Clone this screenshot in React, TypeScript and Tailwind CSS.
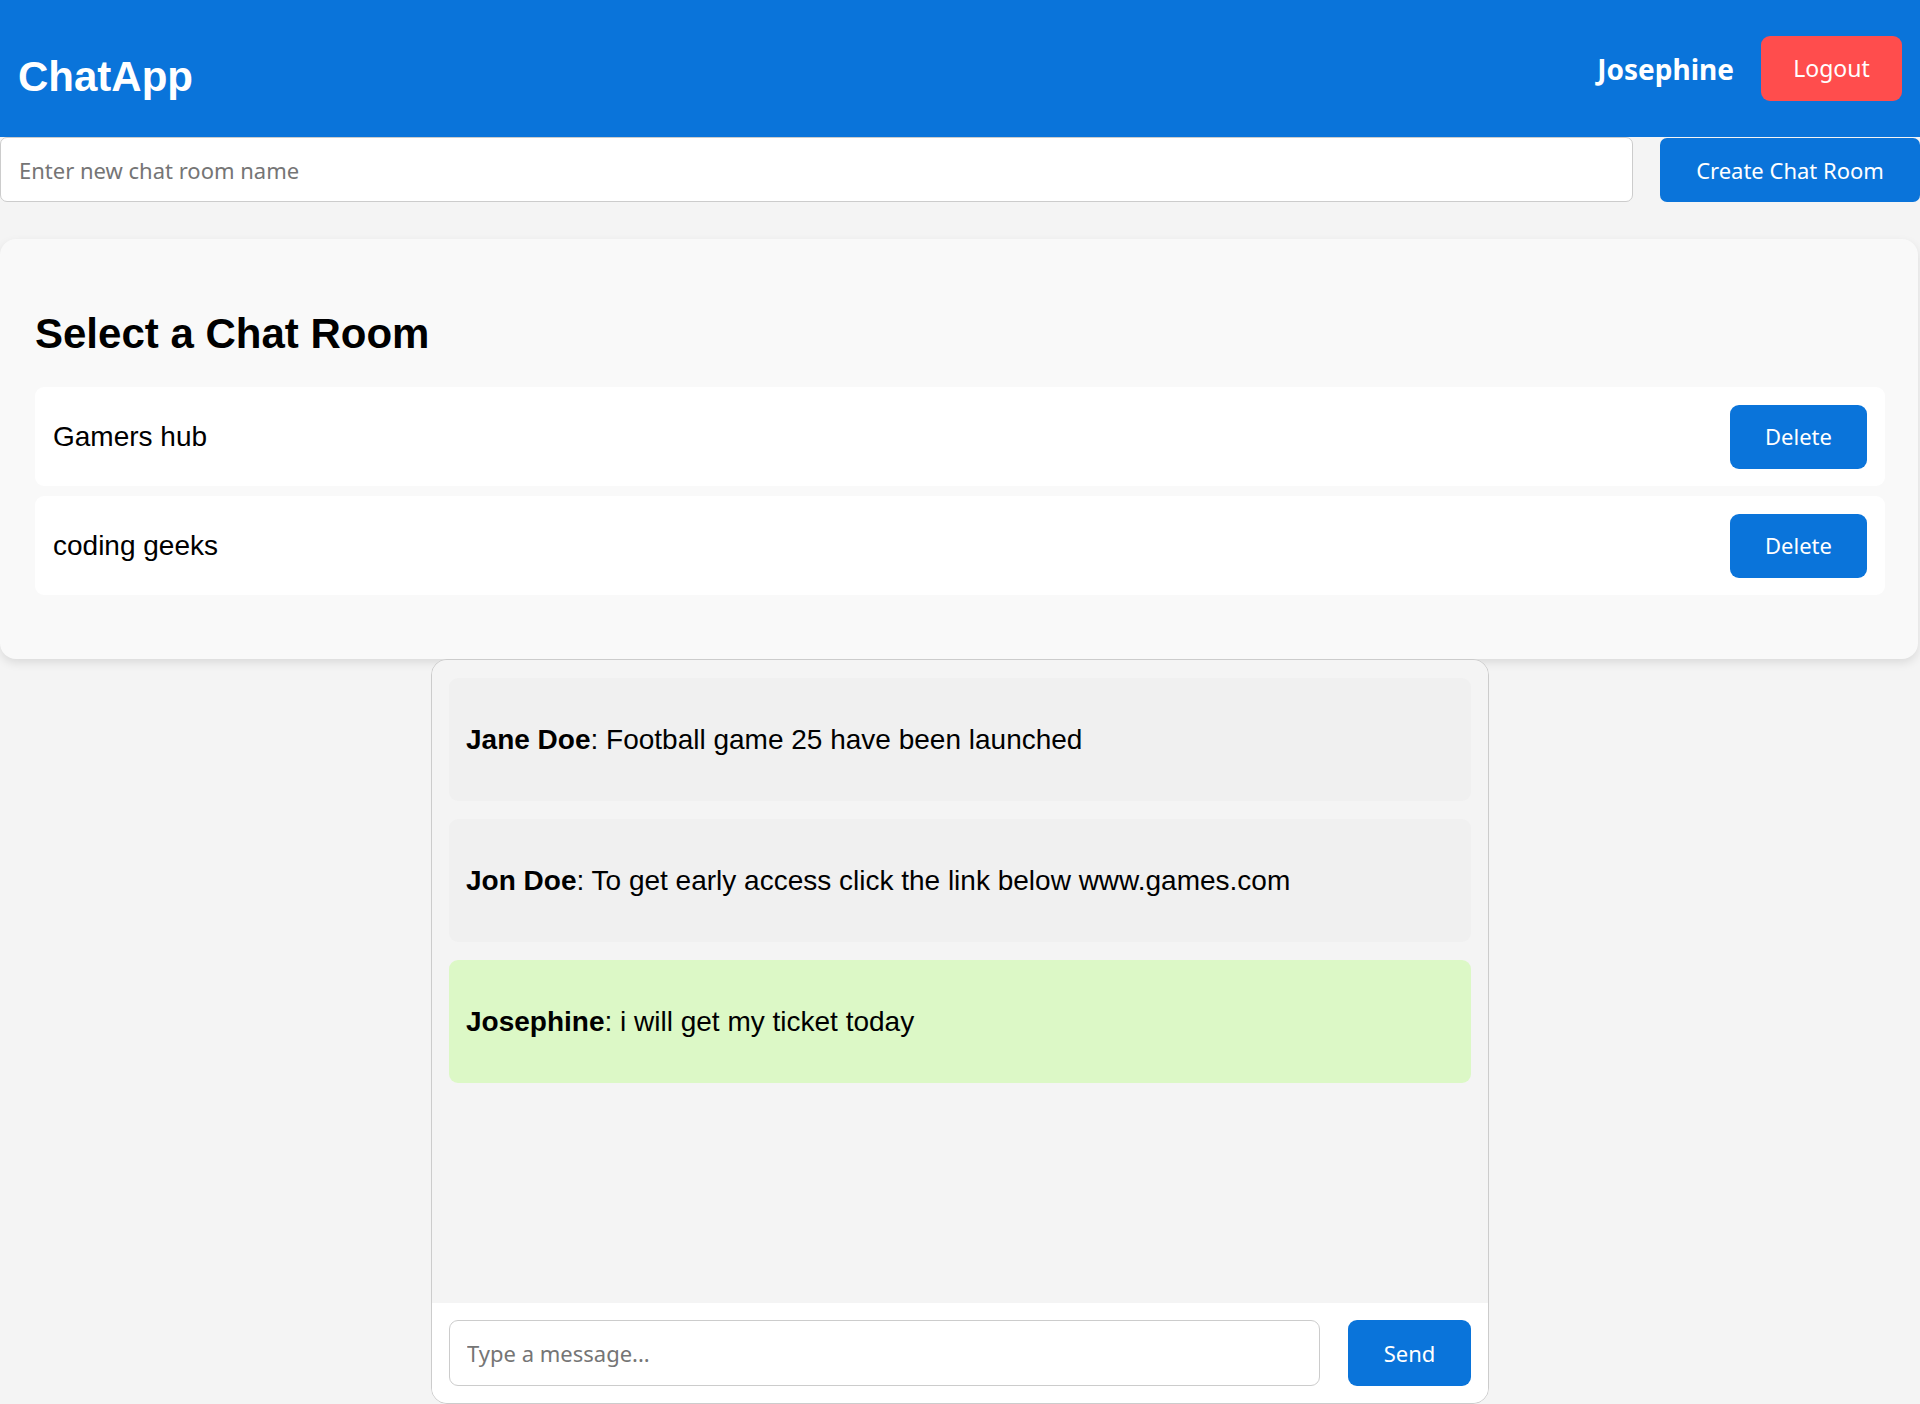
import React from 'react';

const rooms = ['Gamers hub', 'coding geeks'];

const messages = [
  { user: 'Jane Doe', text: 'Football game 25 have been launched', mine: false },
  { user: 'Jon Doe', text: 'To get early access click the link below www.games.com', mine: false },
  { user: 'Josephine', text: 'i will get my ticket today', mine: true },
];

const ui = "font-['Noto_Sans',Tahoma,sans-serif]";

export default function App() {
  return (
    <div className="min-h-screen bg-[#f4f4f4] font-['Liberation_Sans',Arial,sans-serif] text-black">
      {/* Header */}
      <header className="flex h-[137px] items-center justify-between bg-[#0a74da] pl-[18px] pr-[18px]">
        <h1 className="pt-[17px] text-[42px] font-bold leading-none text-white">ChatApp</h1>
        <div className="flex items-center gap-[27px]">
          <span className={`${ui} text-[28px] font-bold text-white`}>Josephine</span>
          <button className={`${ui} h-[65px] w-[141px] rounded-[9px] bg-[#ff4d4d] text-[23px] text-white`}>
            Logout
          </button>
        </div>
      </header>

      {/* New room */}
      <div className="flex h-[65px] gap-[27px]">
        <input
          className={`${ui} h-full flex-1 rounded-[7px] border border-[#ccc] bg-white px-[18px] text-[22px] outline-none placeholder:text-[#757575]`}
          placeholder="Enter new chat room name"
        />
        <button className={`${ui} mt-px h-[64px] w-[260px] rounded-[7px] bg-[#0a74da] text-[22px] text-white`}>
          Create Chat Room
        </button>
      </div>

      {/* Room list */}
      <section className="mt-[37px] mr-[2px] rounded-[16px] bg-[#f9f9f9] pl-[35px] pr-[33px] pt-[71px] pb-[64px] shadow-[0_4px_10px_rgba(0,0,0,0.1)]">
        <h2 className="mb-[29px] text-[42px] font-bold leading-[48px]">Select a Chat Room</h2>
        <div className="flex flex-col gap-[10px]">
          {rooms.map((room) => (
            <div key={room} className="flex h-[99px] items-center justify-between rounded-[9px] bg-white px-[18px]">
              <span className="text-[28px]">{room}</span>
              <button className={`${ui} h-[64px] w-[137px] rounded-[9px] bg-[#0a74da] text-[22px] text-white`}>
                Delete
              </button>
            </div>
          ))}
        </div>
      </section>

      {/* Chat window */}
      <div className="mx-auto flex h-[745px] w-[1058px] flex-col overflow-hidden rounded-[16px] border border-[#ccc]">
        <div className="flex flex-1 flex-col gap-[18px] bg-[#f4f4f4] px-[17px] pt-[18px]">
          {messages.map((m) => (
            <div
              key={m.user}
              className={`flex h-[123px] items-center rounded-[9px] px-[17px] text-[28px] ${m.mine ? 'bg-[#dcf8c6]' : 'bg-[#f0f0f0]'}`}
            >
              <p>
                <strong>{m.user}</strong>: {m.text}
              </p>
            </div>
          ))}
        </div>
        <div className="flex gap-[28px] bg-white p-[17px]">
          <input
            className={`${ui} h-[66px] flex-1 rounded-[9px] border border-[#ccc] px-[17px] text-[22px] outline-none placeholder:text-[#757575]`}
            placeholder="Type a message..."
          />
          <button className={`${ui} h-[66px] w-[123px] rounded-[9px] bg-[#0a74da] text-[22px] text-white`}>
            Send
          </button>
        </div>
      </div>
    </div>
  );
}
